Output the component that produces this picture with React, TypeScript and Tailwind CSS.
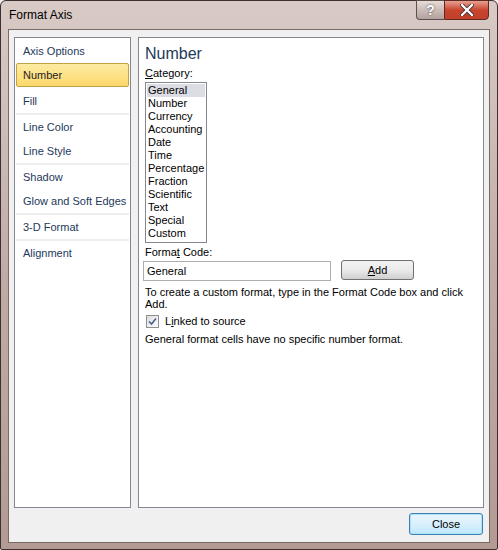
import React from 'react';

const navGroups: string[][] = [
  ['Axis Options', 'Number', 'Fill'],
  ['Line Color', 'Line Style'],
  ['Shadow', 'Glow and Soft Edges'],
  ['3-D Format'],
  ['Alignment'],
];

const categories = [
  'General',
  'Number',
  'Currency',
  'Accounting',
  'Date',
  'Time',
  'Percentage',
  'Fraction',
  'Scientific',
  'Text',
  'Special',
  'Custom',
];

function NavPanel() {
  return (
    <div className="w-[117px] shrink-0 bg-white border border-[#828790] pt-[1px] px-[1px]">
      {navGroups.map((group, gi) => (
        <div key={gi} className={gi > 0 ? 'border-t-2 border-[#eeeef2]' : ''}>
          {group.map((item) => {
            const active = item === 'Number';
            return (
              <div
                key={item}
                className={
                  'h-[24px] flex items-center whitespace-nowrap ' +
                  (active
                    ? 'mb-[2px] pl-[6px] rounded-[2px] border border-[#c2a244] bg-gradient-to-b from-[#fdeba2] to-[#fcd86a] text-[#1e1e1e]'
                    : 'pl-[7px] text-[#1e395b]')
                }
              >
                {item}
              </div>
            );
          })}
        </div>
      ))}
    </div>
  );
}

function NumberPanel() {
  return (
    <div className="flex-1 bg-white border border-[#828790] pl-[6px] pt-[6px]">
      <div className="text-[16px] leading-[20px] text-[#1e395b]">Number</div>
      <div className="mt-[2px] leading-[15px]">
        <span className="underline">C</span>ategory:
      </div>
      <div className="mt-[1px] w-[62px] h-[161px] border border-[#828790] p-[1px]">
        {categories.map((c) => (
          <div
            key={c}
            className={'h-[13px] leading-[13px] pl-[1px] whitespace-nowrap ' + (c === 'General' ? 'bg-[#dcdce4]' : '')}
          >
            {c}
          </div>
        ))}
      </div>
      <div className="mt-[2px] leading-[15px]">
        Forma<span className="underline">t</span> Code:
      </div>
      <div className="mt-[1px] ml-[-2px] flex items-start gap-[10px]">
        <div className="w-[188px] h-[20px] border border-[#abadb3] flex items-center pl-[3px]">General</div>
        <button className="w-[73px] h-[20px] mt-[-1px] rounded-[3px] border border-[#707070] bg-gradient-to-b from-[#f2f2f2] via-[#ebebeb] to-[#cfcfcf] flex items-center justify-center">
          <span className="underline">A</span>dd
        </button>
      </div>
      <div className="mt-[5px] leading-[12px] pr-[10px]">
        To create a custom format, type in the Format Code box and click Add.
      </div>
      <div className="mt-[3px] flex items-center gap-[6px] pl-[1px]">
        <div className="w-[13px] h-[13px] border border-[#8e8f8f] bg-gradient-to-br from-[#dcdcdc] to-[#ffffff] flex items-center justify-center">
          <svg width="9" height="9" viewBox="0 0 9 9">
            <path d="M1 4.5 L3.5 7 L8 1.5" fill="none" stroke="#4a5f97" strokeWidth="1.6" />
          </svg>
        </div>
        <span>
          L<span className="underline">i</span>nked to source
        </span>
      </div>
      <div className="mt-[3px] leading-[13px]">General format cells have no specific number format.</div>
    </div>
  );
}

export default function App() {
  return (
    <div
      className="w-[498px] h-[550px] bg-[#f0f0f0] text-[11px] text-black"
      style={{ fontFamily: '"Liberation Sans", Arial, sans-serif' }}
    >
      <div className="w-[498px] h-[550px] rounded-t-[6px] rounded-b-[2px] border border-[#3c3030] bg-gradient-to-b from-[#d9cac6] via-[#c0aca6] to-[#b39b94] flex flex-col px-[7px] pb-[6px]">
        {/* Title bar */}
        <div className="h-[28px] flex items-start justify-between relative">
          <div className="pt-[5px] pl-[1px] text-[12px] text-black">Format Axis</div>
          <div className="flex mr-[1px] mt-[-1px]">
            <div className="w-[28px] h-[20px] rounded-bl-[4px] border border-[#5e4e4c] border-r-0 bg-gradient-to-b from-[#e8dcd8] via-[#cbbcb8] to-[#b3a39f] flex items-center justify-center text-white font-bold text-[14px] [text-shadow:0_0_2px_#333]">
              ?
            </div>
            <div className="w-[45px] h-[20px] rounded-br-[4px] border border-[#5e2a22] bg-gradient-to-b from-[#e8a093] via-[#c8452d] to-[#c0402a] flex items-center justify-center">
              <svg width="14" height="12" viewBox="0 0 14 12">
                <path d="M2 1 L12 11 M12 1 L2 11" stroke="#4a3030" strokeWidth="4" strokeLinecap="round" />
                <path d="M2 1 L12 11 M12 1 L2 11" stroke="#ffffff" strokeWidth="2.4" strokeLinecap="round" />
              </svg>
            </div>
          </div>
        </div>
        {/* Client */}
        <div className="flex-1 bg-[#f0f0f0] border border-[#7a6a66] flex flex-col px-[5px] pt-[7px] pb-[7px]">
          <div className="flex-1 flex gap-[7px]">
            <NavPanel />
            <NumberPanel />
          </div>
          <div className="flex justify-end mt-[5px] pr-[1px]">
            <button className="w-[74px] h-[22px] rounded-[3px] border border-[#3c7fb1] bg-gradient-to-b from-[#eaf6fd] via-[#d9f0fc] to-[#bee6fd] shadow-[inset_0_0_0_1px_#aee2f9] flex items-center justify-center">
              Close
            </button>
          </div>
        </div>
      </div>
    </div>
  );
}
